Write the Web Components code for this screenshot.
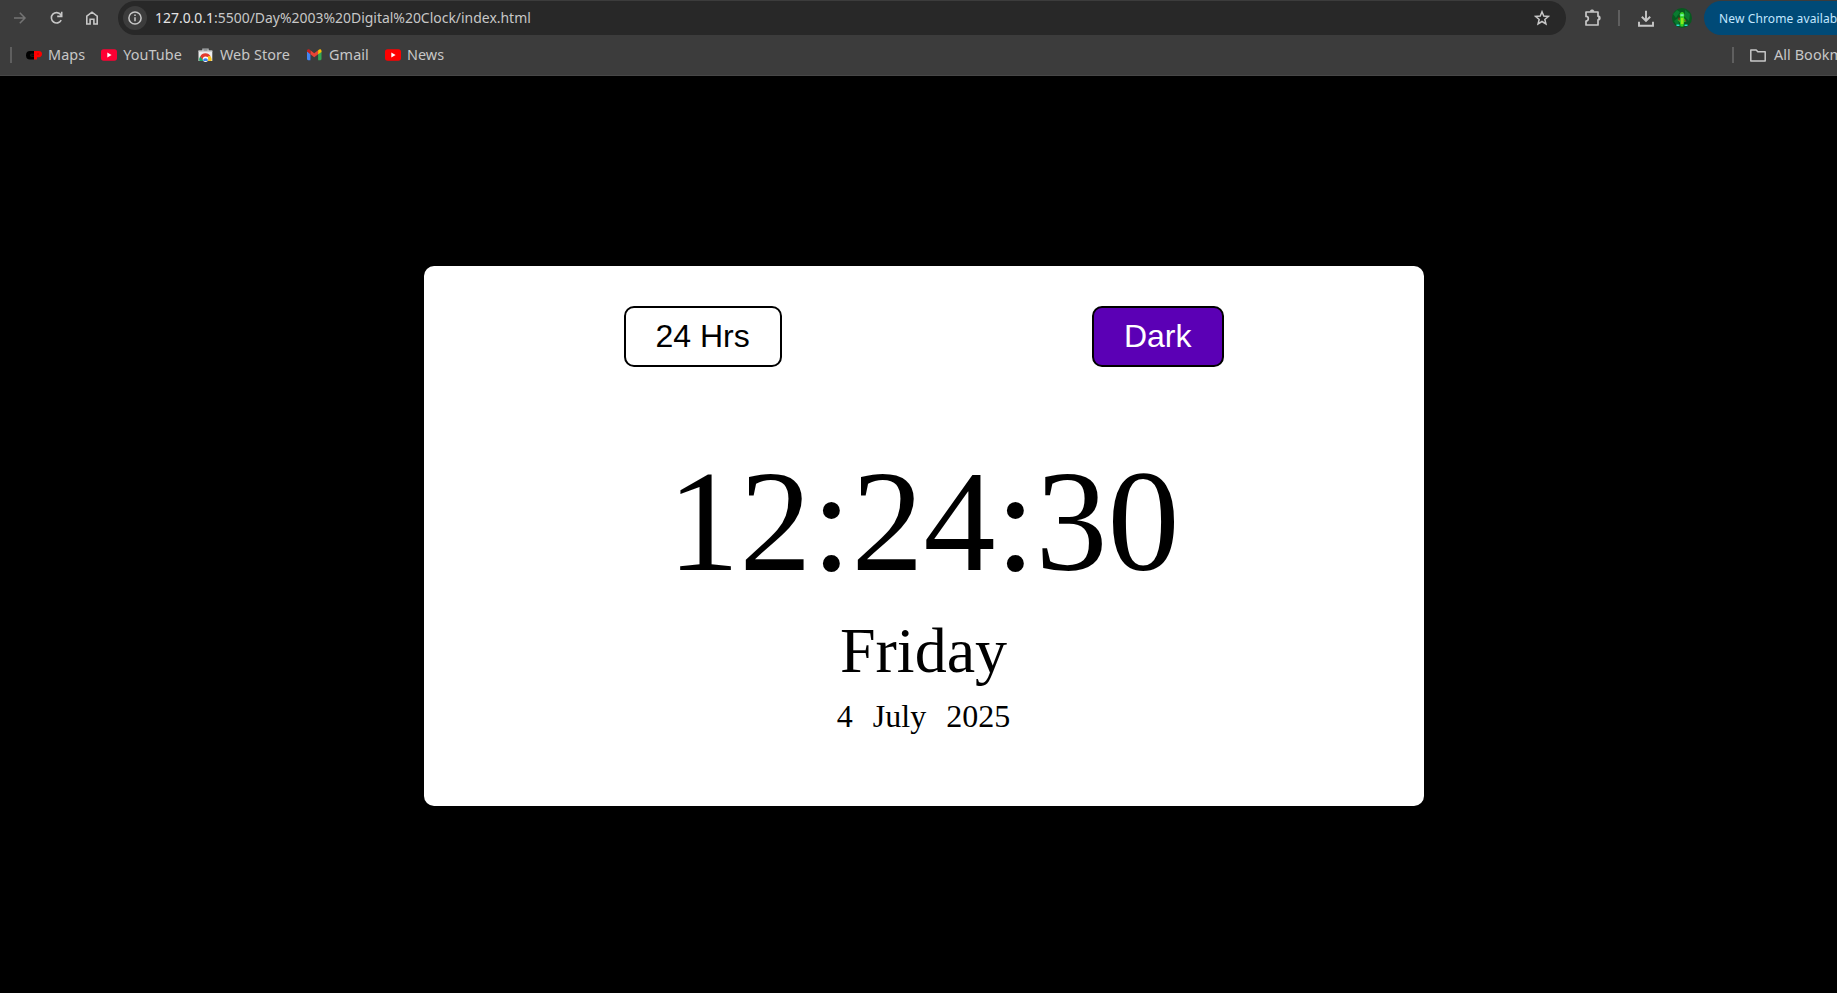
<!DOCTYPE html>
<html lang="en">
<head>
<meta charset="utf-8">
<title>Digital Clock</title>
<style>
html,body{margin:0;height:100%;background:#000;overflow:hidden}
</style>
</head>
<body>
<clock-window></clock-window>
<script>
const define = (name, html) => {
  const t = document.createElement('template');
  t.innerHTML = html;
  customElements.define(name, class extends HTMLElement {
    constructor() {
      super();
      this.attachShadow({mode: 'open'}).append(t.content.cloneNode(true));
    }
  });
};

define('tool-divider', `<style>:host{display:block;width:2px;height:16px;background:#5f5f5f;flex:none}</style>`);

define('tool-icon', `<style>:host{display:flex;flex:none;color:#c7c7c7}::slotted(svg){display:block}</style><slot></slot>`);

define('bookmark-item', `<style>
:host{display:flex;align-items:center;flex:none;white-space:nowrap;color:#c7c7c7;font:14.4px/20px "Noto Sans",sans-serif;letter-spacing:.08px}
.icon{display:flex;width:16px;margin-right:var(--gap,6px)}
</style><span class="icon"><slot name="icon"></slot></span><span><slot></slot></span>`);

define('address-bar', `<style>
:host{display:flex;align-items:center;box-sizing:border-box;width:1448px;height:34px;border-radius:17px;background:#282828;padding:0 16px 0 5px;flex:none;color:#c7c7c7;font:13.95px/20px "Noto Sans",sans-serif}
.info{width:24px;height:24px;border-radius:12px;background:#3c3c3c;display:flex;align-items:center;justify-content:center;margin-right:8px}
.url{flex:1;white-space:nowrap}
b{font-weight:400;color:#e3e3e3}
</style>
<span class="info"><svg width="14" height="14" viewBox="0 0 14 14" fill="none" stroke="#c7c7c7"><circle cx="7" cy="7" r="6.1" stroke-width="1.5"/><path d="M7 6.2V10.2M7 3.6V5.1" stroke-width="1.5"/></svg></span>
<span class="url"><b>127.0.0.1</b>:5500/Day%2003%20Digital%20Clock/index.html</span>
<svg width="16" height="16" viewBox="0 0 16 16" fill="none" stroke="#c7c7c7" stroke-width="1.5"><path d="M8 1.8l1.75 4.25 4.6.37-3.5 3 1.08 4.48L8 11.5l-3.93 2.4 1.08-4.48-3.5-3 4.6-.37z"/></svg>`);

define('browser-toolbar', `<style>
:host{display:flex;align-items:center;height:34px;padding:1px 0 0 12px;overflow:hidden}
.fwd{color:#747474;margin-right:22px}.reload{margin-right:21px}.home{margin-right:19px}
address-bar{margin-right:18px}
.puzzle{margin-right:16px}
tool-divider{margin-right:18px}
.download{margin-right:18px}.avatar{margin-right:12px}
.update{flex:none;box-sizing:border-box;width:180px;height:34px;border-radius:17px;background:#004a77;color:#c2e7ff;padding-left:15px;font:12px/35px "Noto Sans",sans-serif;letter-spacing:.12px;white-space:nowrap}
</style>
<tool-icon class="fwd"><svg width="15" height="16" viewBox="0 0 15 16" fill="none" stroke="currentColor" stroke-width="1.5"><path d="M2 8H13M7.8 2.8L13 8l-5.2 5.2"/></svg></tool-icon>
<tool-icon class="reload"><svg width="15" height="16" viewBox="0 0 15 16" fill="none" stroke="currentColor" stroke-width="1.6"><path d="M12.2 10.2A5.2 5.2 0 1 1 11.7 4.6L12.6 6M12.7 1.8V6.4H8.2"/></svg></tool-icon>
<tool-icon class="home"><svg width="14" height="16" viewBox="0 0 14 16" fill="none" stroke="currentColor" stroke-width="1.6"><path d="M1.8 6.2L7 2.2l5.2 4V14H8.9V9.2H5.1V14H1.8z"/></svg></tool-icon>
<address-bar></address-bar>
<tool-icon class="puzzle"><svg width="18" height="18" viewBox="0 0 18 18" fill="none" stroke="currentColor" stroke-width="1.7" stroke-linejoin="round"><path d="M2 3H14V7.2A1.8 1.8 0 0 1 14 10.8V16H2V12A2.3 2.3 0 0 0 2 7.4z"/><path d="M6.2 2.4A1.9 1.6 0 0 1 10 2.4zM14.6 7.4A1.6 1.8 0 0 1 14.6 10.8z" fill="currentColor" stroke-width=".7"/></svg></tool-icon>
<tool-divider></tool-divider>
<tool-icon class="download"><svg width="16" height="17" viewBox="0 0 16 17" fill="none" stroke="currentColor" stroke-width="1.9"><path d="M8 .7V10.6M3.8 6.7L8 10.8l4.2-4.1M1 11.8V15.8H15V11.8"/></svg></tool-icon>
<tool-icon class="avatar"><svg width="20" height="20" viewBox="0 0 20 20"><circle cx="10" cy="10" r="10" fill="#07591f"/><path d="M1 6L5 2l3 2-4 6zM13 2l5 4-1 7-4-4zM2 13l4-3 1 6-2 2z" fill="#0a7a30"/><path d="M7.6 6.5Q8 4 10 4t2.5 3l-.5 3 2.5 3.2-2.5 1-.6 4.3H8.5l-.7-4.6L5.5 12l2.8-2.4z" fill="#35d323"/><path d="M8.4 6.2h3.2v2H8.4z" fill="#72f5b1"/><path d="M9 10h2.4v6H9z" fill="#8fe81c"/><path d="M6.3 9.6h1.5v3H6.3zM12.6 11.4h1.2v2h-1.2z" fill="#8b291b"/><path d="M4.5 16.5h3v1.4h-3zM12.5 16.5h3v1.4h-3z" fill="#27e4d0"/></svg></tool-icon>
<div class="update">New Chrome available</div>`);

const tube = c => `<svg slot="icon" width="16" height="12" viewBox="0 0 16 12"><rect width="16" height="11.5" y=".2" rx="2.6" fill="${c}"/><path d="M6.3 3.4L10.6 6 6.3 8.6z" fill="#fff"/></svg>`;

define('bookmarks-bar', `<style>
:host{display:flex;align-items:center;box-sizing:border-box;height:41px;padding:0 0 1px 10px;overflow:hidden}
.first{margin-left:14px}
bookmark-item{margin-right:16px}
.store{margin-right:17px}
.spacer{flex:1}
.all{--gap:8px;margin:0 0 0 16px}
.right{width:105px;flex:none;display:flex;align-items:center}
</style>
<tool-divider></tool-divider>
<bookmark-item class="first"><svg slot="icon" width="16" height="9" viewBox="0 0 16 9"><path d="M8 0H4Q0 0 0 4.3T4 8.6H8z" fill="#000"/><path d="M8 0h4.5Q16 0 16 3t-3.2 3.3H11V8.6H8z" fill="#f00"/><path d="M8 3.2H4.8v2H8" fill="none" stroke="#292929" stroke-width=".8"/><path d="M11 3h2" stroke="#b40000" stroke-width=".8"/></svg>Maps</bookmark-item>
<bookmark-item>${tube('#ff0033')}YouTube</bookmark-item>
<bookmark-item class="store"><svg slot="icon" width="16" height="14" viewBox="0 0 16 14"><path d="M4.9 3V1.2h5.2V3" fill="none" stroke="#aeb1b3" stroke-width="1.3"/><path d="M.5 2.6h13.8V13H.5z" fill="#eee"/><path d="M.5 2.6h13.8v1.2H.5z" fill="#c6c6c6"/><path d="M1.4 13a6 6 0 0 1 .8-4.8L7.4 13z" fill="#20a464"/><path d="M2.2 8.4A6 6 0 0 1 12.6 8.3L8 9.2 5.2 12z" fill="#e33b2e"/><path d="M12.6 8.3a6 6 0 0 1 .8 4.7H9l1-4.7z" fill="#fbc116"/><circle cx="7.5" cy="11.3" r="2.7" fill="#fff"/><path d="M5.3 13a2.25 2.25 0 1 1 4.4 0z" fill="#3c82f0"/></svg>Web Store</bookmark-item>
<bookmark-item><svg slot="icon" width="15" height="12" viewBox="0 0 15 12"><path d="M0 2.2L3.4 4.6V11.2H1.1Q0 11.2 0 10.1z" fill="#4285f4"/><path d="M11.1 4.6L14.5 2.2v7.9q0 1.1-1.1 1.1h-2.3z" fill="#34a853"/><path d="M3.4 1.3L7.25 4.2l3.85-2.9v4L7.25 8.2 3.4 5.3z" fill="#ea4335"/><path d="M0 2.5V1.7C0 .1 1.8-.3 3 .8l.4.4v4z" fill="#c5221f"/><path d="M11.1 1.2l.4-.3c1.2-1 3-.7 3 1v1l-3.4 2.4z" fill="#fbbc04"/></svg>Gmail</bookmark-item>
<bookmark-item>${tube('#ff0000')}News</bookmark-item>
<span class="spacer"></span>
<div class="right"><tool-divider></tool-divider>
<bookmark-item class="all"><svg slot="icon" width="16" height="13" viewBox="0 0 16 13" fill="none" stroke="#c7c7c7" stroke-width="1.5" stroke-linejoin="round"><path d="M.8 1H6.2L7.8 2.8H15.2V12H.8z"/></svg>All Bookmarks</bookmark-item></div>`);

define('browser-chrome', `<style>:host{display:block;height:76px;box-sizing:border-box;background:#3c3c3c;border-bottom:1px solid #474747}</style>
<browser-toolbar></browser-toolbar><bookmarks-bar></bookmarks-bar>`);

define('clock-button', `<style>
:host{display:block}
button{display:block;box-sizing:border-box;height:61px;margin:0;padding:0 30px;border:2px solid #000;border-radius:10px;background:var(--fill,#fff);color:var(--ink,#000);font:32px/57px "Liberation Sans",Arial,sans-serif;white-space:nowrap}
</style><button><slot></slot></button>`);

define('digital-clock', `<style>
:host{display:flex;flex-direction:column;align-items:center;box-sizing:border-box;width:1000px;height:540px;border-radius:10px;background:#fff;color:#000;padding-top:40px;font-family:"Liberation Serif","Times New Roman",serif}
.controls{display:flex;justify-content:space-between;width:600px;height:61px}
.dark{--fill:#5b00b5;--ink:#fff}
.time{font-size:144px;line-height:165px;margin-top:72px}
.day{font-size:64px;line-height:74px;margin-top:10px}
.date{display:flex;gap:20px;font-size:32px;line-height:36px;margin-top:10px}
</style>
<div class="controls"><clock-button>24 Hrs</clock-button><clock-button class="dark">Dark</clock-button></div>
<div class="time">12:24:30</div>
<div class="day">Friday</div>
<div class="date"><span>4</span><span>July</span><span>2025</span></div>`);

define('clock-window', `<style>
:host{display:flex;flex-direction:column;height:993px}
browser-chrome{flex:none}
main{flex:1;display:flex;justify-content:center;align-items:flex-start;padding:190px 0 0 10px}
</style><browser-chrome></browser-chrome><main><digital-clock></digital-clock></main>`);
</script>
</body>
</html>
